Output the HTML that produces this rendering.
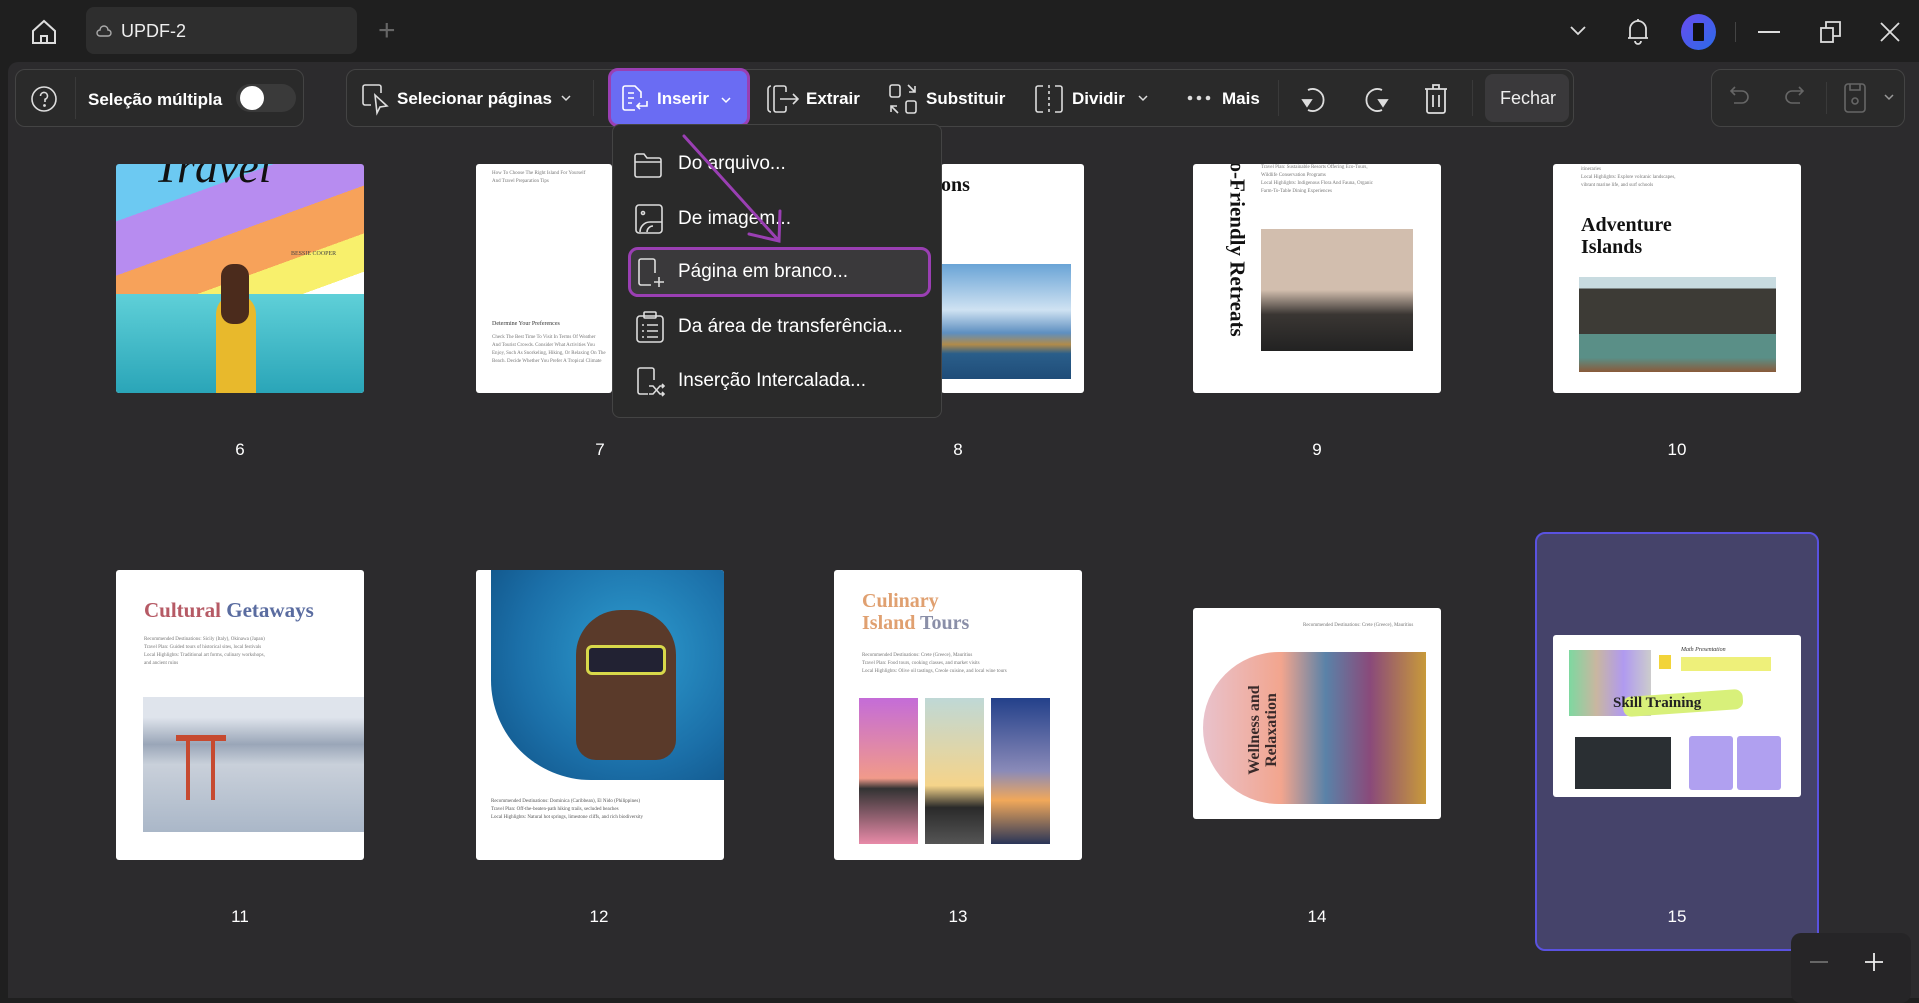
<!DOCTYPE html>
<html><head><meta charset="utf-8">
<style>
*{box-sizing:border-box;margin:0;padding:0}
body{width:1919px;height:998px;background:#1f1f1f;font-family:"Liberation Sans","DejaVu Sans",sans-serif;color:#fff;position:relative;overflow:hidden}
.abs{position:absolute}
.panel{position:absolute;left:8px;top:62px;width:1911px;height:936px;background:#2c2b2d;border-radius:10px 0 0 0}
.box{position:absolute;border:1.5px solid #444;border-radius:10px;background:#2a2a2a}
.tb{position:absolute;top:89px;font-size:17px;font-weight:bold;color:#fff;white-space:nowrap}
svg{position:absolute;overflow:visible}
.card{position:absolute;background:#fff;border-radius:3px;overflow:hidden}
.lbl{position:absolute;font-size:17px;color:#fff;text-align:center;width:60px}
.menu{position:absolute;left:612px;top:124px;width:330px;height:294px;background:#2a2a2a;border:1.5px solid #444;border-radius:8px}
.mi{position:absolute;left:65px;font-size:19px;color:#fff;white-space:nowrap}
.tiny{font-family:"Liberation Serif",serif;font-size:5px;color:#777;line-height:8px}
</style></head><body>
<svg style="left:30px;top:18px" width="28" height="28" viewBox="0 0 28 28" fill="none" stroke="#ddd" stroke-width="2"><path d="M3 13 L14 3 L25 13 V25 H3 Z"/><path d="M11 25 V18 H17 V25"/></svg>
<div class="abs" style="left:86px;top:7px;width:271px;height:47px;background:#2e2e2e;border-radius:8px"></div>
<svg style="left:96px;top:23px" width="16" height="16" viewBox="0 0 16 16" fill="none" stroke="#aaa" stroke-width="1.4"><path d="M4 13 H12 A3 3 0 0 0 12 7 A4 4 0 0 0 4 7 A3 3 0 0 0 4 13 Z"/></svg>
<div class="abs" style="left:121px;top:21px;font-size:18px;color:#eee">UPDF-2</div>
<div class="abs" style="left:378px;top:14px;font-size:30px;color:#666;font-weight:200">+</div>
<svg style="left:1570px;top:26px" width="16" height="10" viewBox="0 0 16 10" fill="none" stroke="#ddd" stroke-width="1.8"><path d="M1 1 L8 8 L15 1"/></svg>
<svg style="left:1626px;top:17px" width="24" height="28" viewBox="0 0 24 28" fill="none" stroke="#ddd" stroke-width="1.8"><path d="M4 21 V12 A8 8 0 0 1 20 12 V21 Z M2 21 H22"/><path d="M9 24 A3 3 0 0 0 15 24"/><path d="M12 2 V4"/></svg>
<div class="abs" style="left:1681px;top:14px;width:35px;height:36px;border-radius:50%;background:linear-gradient(135deg,#6a4cf0,#2a6be8)"></div>
<div class="abs" style="left:1693px;top:23px;width:11px;height:18px;background:#111;border-radius:1px"></div>
<div class="abs" style="left:1735px;top:22px;width:1px;height:20px;background:#444"></div>
<div class="abs" style="left:1758px;top:31px;width:22px;height:2px;background:#ddd"></div>
<svg style="left:1820px;top:20px" width="22" height="24" viewBox="0 0 22 24" fill="none" stroke="#ddd" stroke-width="1.8"><rect x="1" y="8" width="12" height="14"/><path d="M6 8 V2 H20 V16 H13"/></svg>
<svg style="left:1880px;top:22px" width="20" height="20" viewBox="0 0 20 20" stroke="#ddd" stroke-width="1.8"><path d="M1 1 L19 19 M19 1 L1 19"/></svg>

<div class="panel"></div>

<div class="box" style="left:15px;top:69px;width:289px;height:58px"></div>
<svg style="left:31px;top:86px" width="26" height="26" viewBox="0 0 26 26" fill="none" stroke="#ddd" stroke-width="1.6"><circle cx="13" cy="13" r="12"/><path d="M9.5 10 A3.5 3.5 0 1 1 14 13.3 V16"/><circle cx="13.5" cy="19.5" r=".6" fill="#ddd"/></svg>
<div class="abs" style="left:75px;top:77px;width:1px;height:42px;background:#3a3a3a"></div>
<div class="tb" style="left:88px;top:90px">Seleção múltipla</div>
<div class="abs" style="left:236px;top:84px;width:60px;height:28px;border-radius:14px;background:#3a3a3a"></div>
<div class="abs" style="left:240px;top:86px;width:24px;height:24px;border-radius:50%;background:#fff"></div>

<div class="box" style="left:346px;top:69px;width:1228px;height:58px"></div>
<svg style="left:361px;top:83px" width="30" height="32" viewBox="0 0 30 32" fill="none" stroke="#ddd" stroke-width="1.6"><path d="M10 22 H4 A2 2 0 0 1 2 20 V4 A2 2 0 0 1 4 2 H18 A2 2 0 0 1 20 4 V10"/><path d="M14 12 L16 30 L19 24 L26 23 Z"/></svg>
<div class="tb" style="left:397px">Selecionar páginas</div>
<svg style="left:561px;top:95px" width="10" height="7" viewBox="0 0 10 7" fill="none" stroke="#ddd" stroke-width="1.5"><path d="M1 1 L5 5 L9 1"/></svg>
<div class="abs" style="left:593px;top:80px;width:1px;height:36px;background:#3a3a3a"></div>
<div class="abs" style="left:608px;top:68px;width:142px;height:59px;border-radius:10px;border:3px solid #9a3fb3;background:#6a6cf3"></div>
<svg style="left:621px;top:84px" width="30" height="30" viewBox="0 0 30 30" fill="none" stroke="#fff" stroke-width="1.6"><path d="M14 26 H4 A2 2 0 0 1 2 24 V4 A2 2 0 0 1 4 2 H14 L20 8 V14"/><path d="M7 9 H13 M7 14 H13 M7 19 H11"/><path d="M26 17 V22 H16 M19 19 L16 22 L19 25"/></svg>
<div class="tb" style="left:657px">Inserir</div>
<svg style="left:721px;top:97px" width="10" height="7" viewBox="0 0 10 7" fill="none" stroke="#fff" stroke-width="1.5"><path d="M1 1 L5 5 L9 1"/></svg>
<svg style="left:766px;top:84px" width="34" height="30" viewBox="0 0 34 30" fill="none" stroke="#ddd" stroke-width="1.6"><path d="M5 2 A3 3 0 0 0 2 5 V25 A3 3 0 0 0 5 28"/><path d="M20 8 V4 A2 2 0 0 0 18 2 H10 A2 2 0 0 0 8 4 V26 A2 2 0 0 0 10 28 H18 A2 2 0 0 0 20 26 V22"/><path d="M14 15 H32 M27 10 L32 15 L27 20"/></svg>
<div class="tb" style="left:806px">Extrair</div>
<svg style="left:888px;top:83px" width="30" height="32" viewBox="0 0 30 32" fill="none" stroke="#ddd" stroke-width="1.6"><rect x="2" y="2" width="10" height="12" rx="2"/><rect x="18" y="18" width="10" height="12" rx="2"/><path d="M20 2 L27 9 M27 3 V9 H21"/><path d="M10 30 L3 23 M3 29 V23 H9"/></svg>
<div class="tb" style="left:926px">Substituir</div>
<svg style="left:1034px;top:84px" width="30" height="30" viewBox="0 0 30 30" fill="none" stroke="#ddd" stroke-width="1.6"><path d="M9 2 H4 A2 2 0 0 0 2 4 V26 A2 2 0 0 0 4 28 H9"/><path d="M21 2 H26 A2 2 0 0 1 28 4 V26 A2 2 0 0 1 26 28 H21"/><path d="M15 1 V29" stroke-dasharray="3 3"/></svg>
<div class="tb" style="left:1072px">Dividir</div>
<svg style="left:1138px;top:95px" width="10" height="7" viewBox="0 0 10 7" fill="none" stroke="#ddd" stroke-width="1.5"><path d="M1 1 L5 5 L9 1"/></svg>
<svg style="left:1187px;top:95px" width="24" height="6" viewBox="0 0 24 6" fill="#ddd"><circle cx="3" cy="3" r="2.3"/><circle cx="12" cy="3" r="2.3"/><circle cx="21" cy="3" r="2.3"/></svg>
<div class="tb" style="left:1222px">Mais</div>
<div class="abs" style="left:1278px;top:80px;width:1px;height:36px;background:#3a3a3a"></div>
<svg style="left:1300px;top:84px" width="28" height="30" viewBox="0 0 28 30" fill="none" stroke="#ddd" stroke-width="1.8"><path d="M8 6 A11 11 0 1 1 8 26"/><path d="M3 16 L7 22 L11 16 Z" fill="#ddd"/></svg>
<svg style="left:1362px;top:84px" width="28" height="30" viewBox="0 0 28 30" fill="none" stroke="#ddd" stroke-width="1.8"><path d="M20 6 A11 11 0 1 0 20 26"/><path d="M25 16 L21 22 L17 16 Z" fill="#ddd"/></svg>
<svg style="left:1423px;top:81px" width="26" height="34" viewBox="0 0 26 34" fill="none" stroke="#ddd" stroke-width="1.8"><path d="M2 8 H24 M10 8 V4 H16 V8"/><path d="M4 8 V30 A2 2 0 0 0 6 32 H20 A2 2 0 0 0 22 30 V8"/><path d="M10 14 V26 M16 14 V26"/></svg>
<div class="abs" style="left:1472px;top:80px;width:1px;height:36px;background:#3a3a3a"></div>
<div class="abs" style="left:1485px;top:74px;width:84px;height:48px;background:#3a393b;border-radius:8px"></div>
<div class="abs" style="left:1500px;top:88px;font-size:18px;color:#eee">Fechar</div>

<div class="box" style="left:1711px;top:69px;width:194px;height:58px"></div>
<svg style="left:1730px;top:85px" width="20" height="22" viewBox="0 0 20 22" fill="none" stroke="#666" stroke-width="1.6"><path d="M5 2 L1 6 L5 10 M1 6 H12 A6 6 0 0 1 12 18 H4"/></svg>
<svg style="left:1784px;top:85px" width="20" height="22" viewBox="0 0 20 22" fill="none" stroke="#666" stroke-width="1.6"><path d="M15 2 L19 6 L15 10 M19 6 H8 A6 6 0 0 0 8 18 H16"/></svg>
<div class="abs" style="left:1826px;top:82px;width:1px;height:32px;background:#3a3a3a"></div>
<svg style="left:1844px;top:83px" width="22" height="30" viewBox="0 0 22 30" fill="none" stroke="#666" stroke-width="1.6"><rect x="1" y="1" width="20" height="28" rx="3"/><path d="M6 1 V7 H16 V1"/><circle cx="11" cy="18" r="3"/></svg>
<svg style="left:1884px;top:94px" width="10" height="7" viewBox="0 0 10 7" fill="none" stroke="#999" stroke-width="1.5"><path d="M1 1 L5 5 L9 1"/></svg>

<div class="card" style="left:116px;top:164px;width:248px;height:229px;background:linear-gradient(160deg,#6cc9f2 0 18%,#b78cf0 18% 35%,#f7a25a 35% 50%,#f8f06c 50% 62%,#fff 62%)">
  <div class="abs" style="left:0;top:130px;width:248px;height:99px;background:linear-gradient(#5fd0d8,#2aa5b8)"></div>
  <div class="abs" style="left:38px;top:-24px;font-family:'Liberation Serif',serif;font-style:italic;font-size:46px;color:#111">Travel</div>
  <div class="abs" style="left:100px;top:130px;width:40px;height:99px;background:#e8b92c;border-radius:20px 20px 0 0"></div>
  <div class="abs" style="left:105px;top:100px;width:28px;height:60px;background:#4b2b1c;border-radius:12px"></div>
  <div class="abs" style="left:175px;top:87px;font-family:'Liberation Serif',serif;font-size:6px;color:#444">BESSIE COOPER</div>
</div>
<div class="card" style="left:476px;top:164px;width:136px;height:229px">
  <div class="tiny abs" style="left:16px;top:6px">How To Choose The Right Island For Yourself<br>And Travel Preparation Tips</div>
  <div class="abs" style="left:16px;top:157px;font-family:'Liberation Serif',serif;font-size:6px;color:#333">Determine Your Preferences</div>
  <div class="tiny abs" style="left:16px;top:170px">Check The Best Time To Visit In Terms Of Weather<br>And Tourist Crowds. Consider What Activities You<br>Enjoy, Such As Snorkeling, Hiking, Or Relaxing On The<br>Beach. Decide Whether You Prefer A Tropical Climate</div>
</div>
<div class="card" style="left:941px;top:164px;width:143px;height:229px">
  <div class="abs" style="left:0;top:10px;font-family:'Liberation Serif',serif;font-weight:bold;font-size:20px;color:#111">ons</div>
  <div class="abs" style="left:0;top:100px;width:130px;height:115px;background:linear-gradient(#6aa4d6 0%,#cfe2f2 40%,#5e8fc0 60%,#b18b4a 70%,#2a5e8a 78%,#1f4c78)"></div>
</div>
<div class="card" style="left:1193px;top:164px;width:248px;height:229px">
  <div class="abs" style="left:14px;top:0;width:40px;height:229px;overflow:hidden"><div style="position:absolute;left:-80px;top:95px;width:220px;transform:rotate(90deg);font-family:'Liberation Serif',serif;font-weight:bold;font-size:21px;color:#111">o-Friendly Retreats</div></div>
  <div class="tiny abs" style="left:68px;top:0">Travel Plan: Sustainable Resorts Offering Eco-Tours,<br>Wildlife Conservation Programs<br>Local Highlights: Indigenous Flora And Fauna, Organic<br>Farm-To-Table Dining Experiences</div>
  <div class="abs" style="left:68px;top:65px;width:152px;height:122px;background:linear-gradient(#d2beae 0 50%,#3a3633 70%,#222)"></div>
</div>
<div class="card" style="left:1553px;top:164px;width:248px;height:229px">
  <div class="tiny abs" style="left:28px;top:2px">itineraries<br>Local Highlights: Explore volcanic landscapes,<br>vibrant marine life, and surf schools</div>
  <div class="abs" style="left:28px;top:50px;font-family:'Liberation Serif',serif;font-weight:bold;font-size:20px;line-height:22px;color:#111">Adventure<br>Islands</div>
  <div class="abs" style="left:26px;top:113px;width:197px;height:95px;background:linear-gradient(#c8dbe0 0 12%,#3d3b36 12% 60%,#5a8f87 60% 85%,#8a5a3a)"></div>
</div>

<div class="menu">
  <svg style="left:20px;top:26px" width="30" height="28" viewBox="0 0 30 28" fill="none" stroke="#ddd" stroke-width="1.6"><path d="M2 5 A2 2 0 0 1 4 3 H11 L14 7 H26 A2 2 0 0 1 28 9 V24 A2 2 0 0 1 26 26 H4 A2 2 0 0 1 2 24 Z M2 11 H28"/></svg>
  <div class="mi" style="top:28px">Do arquivo...</div>
  <svg style="left:22px;top:79px" width="28" height="30" viewBox="0 0 28 30" fill="none" stroke="#ddd" stroke-width="1.6"><rect x="1" y="1" width="26" height="28" rx="3"/><circle cx="8" cy="9" r="1.5"/><path d="M5 28 A10 10 0 0 1 15 18 H27 M12 28 A6 6 0 0 1 18 22"/></svg>
  <div class="mi" style="top:83px">De imagem...</div>
  <div class="abs" style="left:15px;top:122px;width:303px;height:50px;border:3px solid #9a3fb3;border-radius:10px;background:#3a393b"></div>
  <svg style="left:24px;top:132px" width="28" height="32" viewBox="0 0 28 32" fill="none" stroke="#ddd" stroke-width="1.6"><path d="M14 28 H4 A2 2 0 0 1 2 26 V4 A2 2 0 0 1 4 2 H16 A2 2 0 0 1 18 4 V16"/><path d="M22 20 V30 M17 25 H27"/></svg>
  <div class="mi" style="top:136px">Página em branco...</div>
  <svg style="left:23px;top:186px" width="28" height="32" viewBox="0 0 28 32" fill="none" stroke="#ddd" stroke-width="1.6"><rect x="1" y="5" width="26" height="26" rx="3"/><rect x="8" y="1" width="12" height="6" rx="1"/><path d="M6 14 H8 M11 14 H22 M6 20 H8 M11 20 H22 M6 26 H8 M11 26 H22"/></svg>
  <div class="mi" style="top:191px">Da área de transferência...</div>
  <svg style="left:23px;top:241px" width="30" height="32" viewBox="0 0 30 32" fill="none" stroke="#ddd" stroke-width="1.6"><path d="M12 28 H4 A2 2 0 0 1 2 26 V4 A2 2 0 0 1 4 2 H16 A2 2 0 0 1 18 4 V14"/><path d="M13 20 H17 L24 28 H28 M13 28 H17 L24 20 H28 M26 18 L28 20 L26 22 M26 26 L28 28 L26 30"/></svg>
  <div class="mi" style="top:245px">Inserção Intercalada...</div>
</div>
<svg style="left:0;top:0" width="1919" height="998" fill="none" stroke="#9a3fb3" stroke-width="3" stroke-linecap="round"><path d="M684 136 L779 241 M780 211 L779 241 L749 234"/></svg>

<div class="lbl" style="left:210px;top:440px">6</div>
<div class="lbl" style="left:570px;top:440px">7</div>
<div class="lbl" style="left:928px;top:440px">8</div>
<div class="lbl" style="left:1287px;top:440px">9</div>
<div class="lbl" style="left:1647px;top:440px">10</div>

<div class="card" style="left:116px;top:570px;width:248px;height:290px">
  <div class="abs" style="left:28px;top:28px;font-family:'Liberation Serif',serif;font-weight:bold;font-size:21px"><span style="color:#b65a65">Cultural</span> <span style="color:#5a6ca0">Getaways</span></div>
  <div class="tiny abs" style="left:28px;top:66px">Recommended Destinations: Sicily (Italy), Okinawa (Japan)<br>Travel Plan: Guided tours of historical sites, local festivals<br>Local Highlights: Traditional art forms, culinary workshops,<br>and ancient ruins</div>
  <div class="abs" style="left:27px;top:127px;width:221px;height:135px;background:linear-gradient(#dfe4ec 0 15%,#9aa6b8 35%,#c9d0da 50%,#aab7c8 100%)"></div>
  <div class="abs" style="left:70px;top:170px;width:4px;height:60px;background:#c64a30"></div>
  <div class="abs" style="left:95px;top:170px;width:4px;height:60px;background:#c64a30"></div>
  <div class="abs" style="left:60px;top:165px;width:50px;height:6px;background:#c64a30"></div>
</div>
<div class="card" style="left:476px;top:570px;width:248px;height:290px">
  <div class="abs" style="left:15px;top:0;width:233px;height:210px;background:radial-gradient(circle at 60% 40%,#2e9dd0,#1b6fa8 60%,#0f4f82);border-radius:0 0 0 100px"></div>
  <div class="abs" style="left:100px;top:40px;width:100px;height:150px;background:#5a3a2a;border-radius:45px 45px 20px 20px"></div>
  <div class="abs" style="left:110px;top:75px;width:80px;height:30px;border:3px solid #d8d84a;border-radius:6px;background:#223"></div>
  <div class="tiny abs" style="left:15px;top:228px;color:#555">Recommended Destinations: Dominica (Caribbean), El Nido (Philippines)<br>Travel Plan: Off-the-beaten-path hiking trails, secluded beaches<br>Local Highlights: Natural hot springs, limestone cliffs, and rich biodiversity</div>
</div>
<div class="card" style="left:834px;top:570px;width:248px;height:290px">
  <div class="abs" style="left:28px;top:20px;font-family:'Liberation Serif',serif;font-weight:bold;font-size:20px;line-height:22px;color:#e0a070">Culinary<br>Island <span style="color:#8a8fa8">Tours</span></div>
  <div class="tiny abs" style="left:28px;top:82px">Recommended Destinations: Crete (Greece), Mauritius<br>Travel Plan: Food tours, cooking classes, and market visits<br>Local Highlights: Olive oil tastings, Creole cuisine, and local wine tours</div>
  <div class="abs" style="left:25px;top:128px;width:59px;height:146px;background:linear-gradient(#c46cd8,#f19a8a 55%,#333 62%,#e88aa8)"></div>
  <div class="abs" style="left:91px;top:128px;width:59px;height:146px;background:linear-gradient(#bfd8d6,#f5d48a 60%,#2a2a2a 75%,#555)"></div>
  <div class="abs" style="left:157px;top:128px;width:59px;height:146px;background:linear-gradient(#23408a,#8a8ab8 50%,#f1a85a 70%,#2a3558)"></div>
</div>
<div class="card" style="left:1193px;top:608px;width:248px;height:211px">
  <div class="tiny abs" style="left:110px;top:14px">Recommended Destinations: Crete (Greece), Mauritius</div>
  <div class="abs" style="left:10px;top:44px;width:223px;height:152px;border-radius:76px 0 0 76px;background:linear-gradient(90deg,#e9c2cc,#f2a58e 35%,#5a82a8 55%,#8a4a7a 75%,#c89a3a)"></div>
  <div class="abs" style="left:30px;top:60px;width:80px;height:120px;overflow:hidden"><div style="position:absolute;left:-40px;top:45px;width:160px;transform:rotate(-90deg);font-family:'Liberation Serif',serif;font-weight:bold;font-size:16px;line-height:17px;color:#3a2a2a;text-align:center">Wellness and<br>Relaxation</div></div>
</div>
<div class="abs" style="left:1535px;top:532px;width:284px;height:419px;border:2px solid #5a52e0;border-radius:10px;background:#45436a"></div>
<div class="card" style="left:1553px;top:635px;width:248px;height:162px">
  <div class="abs" style="left:16px;top:15px;width:82px;height:66px;background:linear-gradient(90deg,#7ed8a0,#c9b6a0,#b09af0,#ccc)"></div>
  <div class="abs" style="left:106px;top:20px;width:12px;height:14px;background:#f2d43a"></div>
  <div class="abs" style="left:128px;top:12px;font-family:'Liberation Serif',serif;font-style:italic;font-size:6px;color:#333">Math Presentation</div>
  <div class="abs" style="left:128px;top:22px;width:90px;height:14px;background:#eef07a"></div>
  <div class="abs" style="left:70px;top:58px;width:120px;height:20px;background:#d8f07a;border-radius:8px;transform:rotate(-4deg)"></div>
  <div class="abs" style="left:60px;top:60px;font-family:'Liberation Serif',serif;font-weight:bold;font-size:15px;color:#222">Skill Training</div>
  <div class="abs" style="left:22px;top:102px;width:96px;height:52px;background:#2a2f33"></div>
  <div class="abs" style="left:136px;top:101px;width:44px;height:54px;background:#b0a0f0;border-radius:3px"></div>
  <div class="abs" style="left:184px;top:101px;width:44px;height:54px;background:#b0a0f0;border-radius:3px"></div>
</div>

<div class="lbl" style="left:210px;top:907px">11</div>
<div class="lbl" style="left:569px;top:907px">12</div>
<div class="lbl" style="left:928px;top:907px">13</div>
<div class="lbl" style="left:1287px;top:907px">14</div>
<div class="lbl" style="left:1647px;top:907px">15</div>

<div class="abs" style="left:1791px;top:933px;width:120px;height:70px;background:#262527;border-radius:10px"></div>
<div class="abs" style="left:1810px;top:961px;width:18px;height:2px;background:#666"></div>
<svg style="left:1864px;top:952px" width="20" height="20" viewBox="0 0 20 20" stroke="#eee" stroke-width="1.8"><path d="M10 1 V19 M1 10 H19"/></svg>
</body></html>
